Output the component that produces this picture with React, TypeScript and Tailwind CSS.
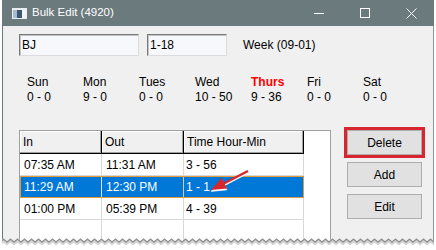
import React from 'react';

const days = [
  { name: 'Sun', value: '0 - 0' },
  { name: 'Mon', value: '9 - 0' },
  { name: 'Tues', value: '0 - 0' },
  { name: 'Wed', value: '10 - 50' },
  { name: 'Thurs', value: '9 - 36', today: true },
  { name: 'Fri', value: '0 - 0' },
  { name: 'Sat', value: '0 - 0' },
];

const rows = [
  { inTime: '07:35 AM', outTime: '11:31 AM', total: '3 - 56' },
  { inTime: '11:29 AM', outTime: '12:30 PM', total: '1 - 1', selected: true },
  { inTime: '01:00 PM', outTime: '05:39 PM', total: '4 - 39' },
];

// zigzag for the torn bottom edge of the screenshot
const tornEdge = (offset: number) => {
  const pts: string[] = [];
  for (let x = 0; x <= 440; x += 7) {
    pts.push(`${x},${9 + offset}`);
    pts.push(`${x + 3.5},${6 + offset}`);
  }
  return pts;
};

const AppIcon = () => (
  <svg width="15" height="11" viewBox="0 0 15 11">
    <rect x="0" y="0" width="15" height="11" fill="#e9eef3" />
    <rect x="1" y="2" width="13" height="8" fill="#3f5670" />
    <rect x="1" y="2" width="4" height="8" fill="#a9bacb" />
    <rect x="10" y="2" width="4" height="8" fill="#f2f5f8" />
  </svg>
);

const WinButton = ({ children }: { children: React.ReactNode }) => (
  <div className="w-[46px] h-full flex items-center justify-center">{children}</div>
);

const Button = ({ label }: { label: string }) => (
  <div className="w-[75px] h-[25px] bg-[#e1e1e1] border border-[#adadad] flex items-center justify-center text-[12px] text-black">
    {label}
  </div>
);

const cellBase = 'h-full flex items-center border-r shrink-0';

export default function App() {
  const edge = tornEdge(0);
  const shadow1 = tornEdge(1.5).join(' ');
  const shadow2 = tornEdge(3.2).join(' ');

  return (
    <div className="relative w-[436px] h-[250px] overflow-hidden bg-white font-['Liberation_Sans',Arial,sans-serif]">
      <div className="ml-[2px] w-[432px] h-[250px] flex flex-col">
        {/* Title bar */}
        <div className="h-[31px] bg-[#6b7a7d] flex items-center pl-[10px] text-white">
          <AppIcon />
          <span className="ml-[5px] text-[11.5px]">Bulk Edit (4920)</span>
          <div className="ml-auto flex h-full">
            <WinButton>
              <svg width="10" height="10" viewBox="0 0 10 10">
                <path d="M0 5.5H10" stroke="#fff" strokeWidth="1" />
              </svg>
            </WinButton>
            <WinButton>
              <svg width="10" height="10" viewBox="0 0 10 10">
                <rect x="0.5" y="0.5" width="9" height="9" fill="none" stroke="#fff" strokeWidth="1" />
              </svg>
            </WinButton>
            <WinButton>
              <svg width="11" height="11" viewBox="0 0 11 11">
                <path d="M0.5 0.5L10.5 10.5M10.5 0.5L0.5 10.5" stroke="#fff" strokeWidth="1" />
              </svg>
            </WinButton>
          </div>
        </div>

        {/* Body */}
        <div className="flex-1 bg-[#f0f0f0] border-l border-[#6b7a7d] border-r border-r-[#8d9698] text-black text-[12px]">
          <div className="mt-[8px] pl-[16px] flex items-center">
            <div className="w-[120px] h-[22px] bg-[#f6f8fb] border border-[#7a7a7a] border-b-[#dcdcdc] border-r-[#dcdcdc] shadow-[inset_1px_1px_0_#c4c4c4] flex items-center pl-[2px]">
              BJ
            </div>
            <div className="ml-[8px] w-[80px] h-[22px] bg-[#f6f8fb] border border-[#7a7a7a] border-b-[#dcdcdc] border-r-[#dcdcdc] shadow-[inset_1px_1px_0_#c4c4c4] flex items-center pl-[2px]">
              1-18
            </div>
            <span className="ml-[16px]">Week (09-01)</span>
          </div>

          <div className="mt-[19px] pl-[24px] grid grid-cols-[repeat(7,56px)] leading-[15px]">
            {days.map((d) => (
              <div key={d.name} className="flex flex-col">
                <span className={d.today ? 'text-[#ff0000] font-bold' : ''}>{d.name}</span>
                <span>{d.value}</span>
              </div>
            ))}
          </div>

          <div className="mt-[22px] pl-[16px] flex items-start">
            {/* List view */}
            <div className="mt-[3px] w-[312px] h-[120px] bg-white border border-[#a0a0a0] flex flex-col">
              <div className="flex h-[23px]">
                {['In', 'Out', 'Time Hour-Min'].map((h, i) => (
                  <div
                    key={h}
                    className={`${i === 2 ? 'w-[120px]' : 'w-[82px]'} h-full bg-[#f0f0f0] border-r border-b border-black shadow-[inset_-1px_-1px_0_#a0a0a0,inset_1px_1px_0_#fff] flex items-center pl-[3px]`}
                  >
                    {h}
                  </div>
                ))}
              </div>
              {rows.map((r) =>
                r.selected ? (
                  <div key={r.inTime} className="flex h-[22px]">
                    <div className="relative flex h-full text-white">
                      <div className={`${cellBase} w-[82px] pl-[4px] bg-[#0078d7] border-[#dfe8f0]`}>{r.inTime}</div>
                      <div className={`${cellBase} w-[82px] pl-[4px] bg-[#0078d7] border-[#d8c8a8]`}>{r.outTime}</div>
                      <div className={`${cellBase} w-[120px] pl-[2px] bg-[#0078d7] border-[#e39a3b]`}>{r.total}</div>
                      {/* focus rectangle */}
                      <div className="absolute inset-0 border border-dotted border-black shadow-[0_0_0_0_transparent] outline-1 outline-[#e39a3b] -outline-offset-1 -z-0" />
                    </div>
                  </div>
                ) : (
                  <div key={r.inTime} className="flex h-[22px]">
                    <div className="flex h-full border-b border-[#d8d8d8]">
                      <div className={`${cellBase} w-[82px] pl-[4px] border-[#d8d8d8]`}>{r.inTime}</div>
                      <div className={`${cellBase} w-[82px] pl-[4px] border-[#d8d8d8]`}>{r.outTime}</div>
                      <div className={`${cellBase} w-[120px] pl-[2px] border-[#d8d8d8]`}>{r.total}</div>
                    </div>
                  </div>
                )
              )}
              <div className="flex flex-1">
                <div className="w-[82px] border-r border-[#d8d8d8]" />
                <div className="w-[82px] border-r border-[#d8d8d8]" />
                <div className="w-[120px] border-r border-[#d8d8d8]" />
              </div>
            </div>

            {/* Buttons */}
            <div className="ml-[13px] flex flex-col">
              <div className="w-[81px] h-[31px] border-[3px] border-[#d7262e]">
                <Button label="Delete" />
              </div>
              <div className="mt-[4px] ml-[3px]">
                <Button label="Add" />
              </div>
              <div className="mt-[7px] ml-[3px]">
                <Button label="Edit" />
              </div>
            </div>
          </div>
        </div>
      </div>

      {/* Callout arrow */}
      <svg className="absolute left-0 top-0 pointer-events-none" width="436" height="250" viewBox="0 0 436 250">
        <g transform="translate(0,1.5)" fill="#fff" stroke="#fff">
          <line x1="248" y1="171" x2="222" y2="184.5" strokeWidth="2.5" />
          <polygon points="211,190 227,188.4 221.6,177.8" strokeWidth="0.5" />
        </g>
        <line x1="248" y1="171" x2="222" y2="184.5" stroke="#d7262e" strokeWidth="2.5" />
        <polygon points="211,190 227,188.4 221.6,177.8" fill="#d7262e" />
      </svg>

      {/* Torn bottom edge */}
      <svg className="absolute left-0 top-[232px]" width="436" height="18" viewBox="0 0 436 18">
        <polygon points={`${edge.join(' ')} 440,18 0,18`} fill="#fff" />
        <polyline points={shadow1} fill="none" stroke="#8f8f8f" strokeWidth="2" />
        <polyline points={shadow2} fill="none" stroke="#d4d4d4" strokeWidth="2" />
        <rect x="0" y="0" width="2" height="18" fill="#fff" />
        <rect x="434" y="0" width="2" height="18" fill="#fff" />
      </svg>
    </div>
  );
}
